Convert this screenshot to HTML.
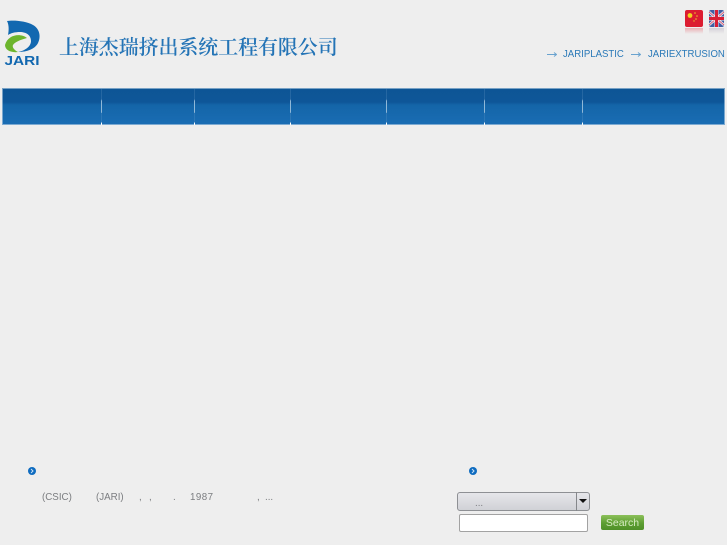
<!DOCTYPE html>
<html lang="zh">
<head>
<meta charset="utf-8">
<title>上海杰瑞挤出系统工程有限公司</title>
<style>
html,body{margin:0;padding:0;background:#eeeeee;}
body{position:relative;width:727px;height:545px;overflow:hidden;font-family:"Liberation Sans",sans-serif;}
.a{position:absolute;white-space:nowrap;}
.nav{left:2px;top:88px;width:723px;height:36.500px;background:linear-gradient(#0d5595 0,#0e5698 38%,#1465a8 46%,#1a6db4 100%);box-shadow:0 0 0 1px rgba(190,212,230,.6) inset;}
.sep{position:absolute;top:88px;width:1px;height:37px;background:linear-gradient(rgba(120,165,205,.22) 0,rgba(120,165,205,.22) 30%,#8fb8d8 35%,#8fb8d8 66%,rgba(120,165,205,.22) 68%,rgba(120,165,205,.22) 93%,#fff 94%);}
.lnk{font-size:10.500px;color:#2a79b8;top:47.500px;line-height:13px;transform:scaleX(.915);transform-origin:0 0;}
.t{font-size:10.500px;color:#7b7d80;top:491px;line-height:12px;transform:scaleX(.93);transform-origin:0 0;}
</style>
</head>
<body>
<svg class="a" style="left:0;top:15px" width="48" height="55" viewBox="0 15 48 55">
<path d="M7 21C14 20 26 21 33 25C40 29 41 37 38 43C35 49 27 52 18 52C24 51 31 47 31 41C31 35 26 32 20 32C15 32 11 33 8 35C9 30 9 25 7 21Z" fill="#1268b0"/>
<path d="M27 38C21 33 8 34 5 45C5 50 11 53 18 52C14 50 12 47 13 45C15 42 20 40 27 38Z" fill="#6cb52d"/>
<text x="4.500" y="65" font-family="Liberation Sans,sans-serif" font-size="13" font-weight="700" fill="#1268b0" textLength="35" lengthAdjust="spacingAndGlyphs">JARI</text>
</svg>

<div class="a" style="left:59px;top:34px;font-family:'Liberation Serif','Noto Serif CJK SC',serif;font-size:20px;font-weight:600;line-height:28px;color:#2474b6;letter-spacing:-.1px;">上海杰瑞挤出系统工程有限公司</div>

<svg class="a" style="left:685px;top:10px" width="40" height="26" viewBox="0 0 40 26">
<defs>
<linearGradient id="f" x1="0" y1="0" x2="0" y2="1"><stop offset="0" stop-color="#e0232f" stop-opacity=".3"/><stop offset="1" stop-color="#e0232f" stop-opacity="0"/></linearGradient>
<linearGradient id="g" x1="0" y1="0" x2="0" y2="1"><stop offset="0" stop-color="#9a8fa8" stop-opacity=".3"/><stop offset="1" stop-color="#9a8fa8" stop-opacity="0"/></linearGradient>
</defs>
<rect x="0" y="0" width="18" height="17" rx="2" fill="#dc1c30"/>
<circle cx="5" cy="5.500" r="2.400" fill="#f2d21e"/>
<circle cx="10" cy="3" r=".8" fill="#e8c030"/><circle cx="12" cy="6" r=".8" fill="#e8c030"/><circle cx="11" cy="9" r=".8" fill="#e8c030"/><circle cx="9" cy="11" r=".7" fill="#e8c030"/>
<rect x="0" y="18" width="18" height="6" fill="url(#f)"/>
<rect x="24" y="0" width="15" height="17" rx="2" fill="#3f5fa4"/>
<path d="M24 2L39 15M39 2L24 15" stroke="#e8e2ea" stroke-width="2.500"/>
<path d="M24 2L39 15M39 2L24 15" stroke="#d8405a" stroke-width=".8"/>
<rect x="29.500" y="0" width="4" height="17" fill="#f0eaee"/>
<rect x="24" y="6.500" width="15" height="4" fill="#f0eaee"/>
<rect x="30" y="0" width="3" height="17" fill="#d81e34"/>
<rect x="24" y="7" width="15" height="3" fill="#d81e34"/>
<rect x="24" y="18" width="15" height="6" fill="url(#g)"/>
</svg>

<svg class="a" style="left:547px;top:51px" width="10" height="7" viewBox="0 0 10 7"><path d="M0 3.500H9M7 1.500L9.500 3.500L7 5.500" fill="none" stroke="#6aa3cf" stroke-width="1"/></svg>
<div class="a lnk" style="left:563px;">JARIPLASTIC</div>
<svg class="a" style="left:631px;top:51px" width="10" height="7" viewBox="0 0 10 7"><path d="M0 3.500H9M7 1.500L9.500 3.500L7 5.500" fill="none" stroke="#6aa3cf" stroke-width="1"/></svg>
<div class="a lnk" style="left:648px;">JARIEXTRUSION</div>

<div class="a nav"></div>
<div class="sep" style="left:101px"></div>
<div class="sep" style="left:194px"></div>
<div class="sep" style="left:290px"></div>
<div class="sep" style="left:386px"></div>
<div class="sep" style="left:484px"></div>
<div class="sep" style="left:582px"></div>

<svg class="a" style="left:28px;top:467px" width="8" height="8" viewBox="0 0 8 8"><circle cx="4" cy="4" r="4" fill="#0f6cc0"/><path d="M3 2L5 4L3 6" fill="none" stroke="#cfe3f5" stroke-width="1"/></svg>
<svg class="a" style="left:469px;top:467px" width="8" height="8" viewBox="0 0 8 8"><circle cx="4" cy="4" r="4" fill="#0f6cc0"/><path d="M3 2L5 4L3 6" fill="none" stroke="#cfe3f5" stroke-width="1"/></svg>

<div class="a t" style="left:42px;">(CSIC)</div>
<div class="a t" style="left:96px;">(JARI)</div>
<div class="a t" style="left:139px;">,</div>
<div class="a t" style="left:149px;">,</div>
<div class="a t" style="left:173px;">.</div>
<div class="a t" style="left:190px;letter-spacing:.5px;">1987</div>
<div class="a t" style="left:257px;">,</div>
<div class="a t" style="left:265px;">...</div>

<div class="a" style="left:457px;top:492px;width:131px;height:17px;border:1px solid #8e9094;border-radius:3px;background:linear-gradient(#e6e6ea,#d0d1d6);"></div>
<div class="a" style="left:576px;top:492px;width:1px;height:19px;background:#85878b;"></div>
<div class="a t" style="left:475px;top:496.500px;">...</div>
<div class="a" style="left:579px;top:499px;width:0;height:0;border-left:4px solid transparent;border-right:4px solid transparent;border-top:4px solid #111;"></div>

<div class="a" style="left:459px;top:514px;width:127px;height:16px;border:1px solid #a2a2a2;border-radius:2px;background:#fff;"></div>

<div class="a" style="left:601px;top:515px;width:43px;height:15px;border-radius:2px;background:linear-gradient(#8cc05a,#5d9e32 55%,#4f9028);color:#d6ebc2;font-size:10.500px;line-height:16px;text-align:center;">Search</div>
</body>
</html>
